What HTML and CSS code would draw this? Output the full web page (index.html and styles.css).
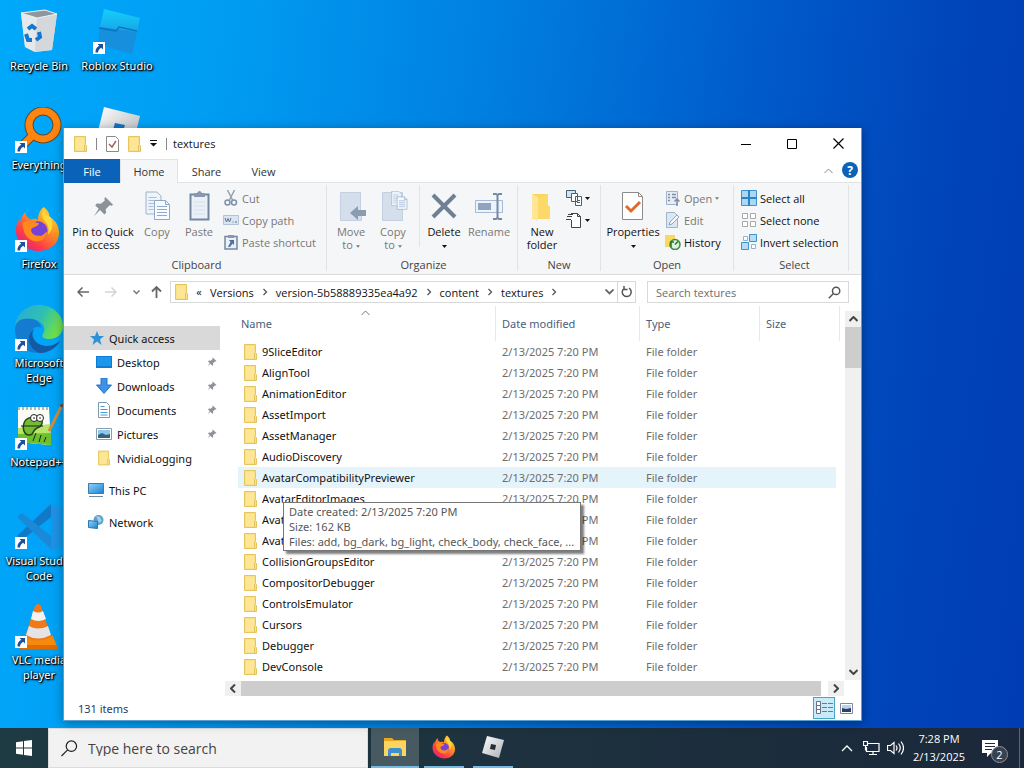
FILE: index.html
```html
<!DOCTYPE html>
<html lang="en">
<head>
    <meta charset="UTF-8">
    <meta name="viewport" content="width=device-width, initial-scale=1.0">
    <title>textures</title>
    <link rel="stylesheet" href="styles.css">
</head>
<body>
    <!-- shared icons -->
    <svg class="defs" aria-hidden="true">
        <defs>
            <linearGradient id="fxBody" x1="1" y1="0" x2="0.2" y2="1">
                <stop offset="0" stop-color="#fff04a"/>
                <stop offset="0.4" stop-color="#ff9a20"/>
                <stop offset="0.75" stop-color="#ff3d45"/>
                <stop offset="1" stop-color="#d8208c"/>
            </linearGradient>
            <linearGradient id="edgeTop" x1="0" y1="0" x2="1" y2="0.4">
                <stop offset="0" stop-color="#28a8e0"/>
                <stop offset="0.6" stop-color="#2fc0b0"/>
                <stop offset="1" stop-color="#6ee04c"/>
            </linearGradient>
            <linearGradient id="screen" x1="0" y1="0" x2="1" y2="1">
                <stop offset="0" stop-color="#8fd4fa"/>
                <stop offset="1" stop-color="#1a7fd0"/>
            </linearGradient>
            <linearGradient id="silver" x1="0" y1="0" x2="1" y2="1">
                <stop offset="0" stop-color="#ffffff"/>
                <stop offset="1" stop-color="#a9b0b6"/>
            </linearGradient>
            <linearGradient id="studio" x1="0" y1="0" x2="0" y2="1">
                <stop offset="0" stop-color="#14d0fa"/>
                <stop offset="1" stop-color="#18a4ea"/>
            </linearGradient>
        </defs>
        <symbol id="folder" viewBox="0 0 13 16">
            <path d="M.5.5h11v8l1 1v6H.5z" fill="#fbe08a" stroke="#e6c55c"/>
            <path d="M2 2h8v12H2z" fill="#fde695"/>
            <path d="M10.500 9v6" stroke="#e3c463"/>
        </symbol>
        <symbol id="pin" viewBox="0 0 24 24">
            <path d="M14 1l9 9-2 1-2-.4-4.500 4.500.5 4-2 2-5-5L1 23l5.500-8.500-4-4 2-2 4.500.4L13.500 5 13 3z" fill="#8c9299"/>
        </symbol>
        <symbol id="shortcut" viewBox="0 0 12 12">
            <path d="M0 0h12v12H0z" fill="#fff"/>
            <path d="M4.500 2H10v5.500L8.200 5.700C6 7 5.300 8 5 10.500H2.500C2.300 7.300 3.600 5.200 6.300 3.800z" fill="#1d4f9c"/>
        </symbol>
        <symbol id="firefox" viewBox="0 0 48 48">
            <path d="M30 1c5 4 6 7 6 10 5 3 10 9 10 17 0 11-9 19-21 19S1 38 1 26c0-6 2-11 4-13v6c1-6 3-10 6-13 0 4 2 7 6 8 4-1 5-1 7 1 0-6 2-11 6-14z" fill="url(#fxBody)"/>
            <circle cx="24" cy="26" r="10" fill="#7542d8"/>
            <path d="M8 18c5-4 12-1 17 0-1 4-5 3-8 6-1 3 2 7 7 7 5 1 7-3 10-5-1 9-9 13-16 10C11 33 8 26 8 18z" fill="#ff8a1c"/>
            <path d="M30 4c-3 6-1 9 2 13 3 3 4 8 2 13 6-5 7-13 2-19-2-2-5-3-6-7z" fill="#ffd93b"/>
        </symbol>
        <symbol id="caret" viewBox="0 0 7 4"><path d="M0 0h7L3.500 4z" fill="currentColor"/></symbol>
        <symbol id="chevron" viewBox="0 0 8 8"><path d="M2.500 1L5.500 4 2.500 7" fill="none" stroke="currentColor" stroke-width="1.300"/></symbol>
        <symbol id="glass" viewBox="0 0 16 16">
            <circle cx="10" cy="6" r="4.500" fill="none" stroke="currentColor" stroke-width="1.800"/>
            <path d="M7 9l-6 6" stroke="currentColor" stroke-width="1.800"/>
        </symbol>
        <symbol id="sheets" viewBox="0 0 26 30">
            <path d="M1 1h11l4 4v18H1z" fill="#eef3fa" stroke="#9db4d0"/>
            <path d="M3.500 6.500h8M3.500 9.500h8M3.500 12.500h8M3.500 15.500h5M3.500 18.500h5" stroke="#a9bedb"/>
            <path d="M9.500 9.500h11l4 4v15h-15z" fill="#f7faff" stroke="#8fa9ca"/>
            <path d="M20.500 9.500v4h4M12 15.500h10M12 18.500h10M12 21.500h10M12 24.500h10" fill="none" stroke="#8fa9ca"/>
        </symbol>
    </svg>

    <main class="desktop">
        <div class="shortcuts">
            <a class="shortcut" href="#">
                <svg class="app-icon" viewBox="0 0 48 48">
                    <path d="M6 5l24-3 12 4-5 36-17 2-10-5z" fill="#d3d7da"/>
                    <path d="M6 5l16 5-2 34-10-5z" fill="#e6e9eb"/>
                    <path d="M22 10l20-4-5 36-17 2z" fill="#d5d8db"/>
                    <path d="M6 5l24-3 12 4-20 4z" fill="#8c979f" stroke="#eef0f1"/>
                    <path d="M13 21l4-3 4 3M24 24l1 5-4 3M17 32h-4l-2-6" fill="none" stroke="#1377cf" stroke-width="4"/>
                </svg>
                <span>Recycle Bin</span>
            </a>
            <a class="shortcut" href="#">
                <svg class="app-icon" viewBox="0 0 48 48">
                    <circle cx="28" cy="18" r="14" fill="none" stroke="#5d4a2c" stroke-width="9"/>
                    <path d="M18 28L7 39" stroke="#5d4a2c" stroke-width="9"/>
                    <circle cx="28" cy="18" r="14" fill="none" stroke="#ff8410" stroke-width="7"/>
                    <path d="M18 28L7 39" stroke="#ff8410" stroke-width="7"/>
                    <use href="#shortcut" x="0" y="34" width="12" height="12"/>
                </svg>
                <span>Everything</span>
            </a>
            <a class="shortcut" href="#">
                <svg class="app-icon" viewBox="0 0 48 48">
                    <use href="#firefox" width="46" height="46"/>
                    <use href="#shortcut" x="0" y="34" width="12" height="12"/>
                </svg>
                <span>Firefox</span>
            </a>
            <a class="shortcut" href="#">
                <svg class="app-icon" viewBox="0 0 48 48">
                    <path d="M0 22C1 8 12 0 24 0c14 0 24 10 24 21 0 9-7 13-14 13-5 0-8-2-6-5 5-8-4-15-13-15C8 14 2 17 0 22z" fill="url(#edgeTop)"/>
                    <path d="M0 24c0-8 8-12 17-10 6 1 9 5 9 9-4-3-10 0-10 7 0 10 8 17 17 17-5 1-8 1-10 1C9 48 0 37 0 24z" fill="#147bd1"/>
                    <path d="M19 24c-5 8 3 17 13 17 6 0 10-3 13-5-4 8-13 12-20 12-10-3-16-16-6-24z" fill="#1459a5"/>
                    <use href="#shortcut" x="0" y="34" width="12" height="12"/>
                </svg>
                <span>Microsoft<br>Edge</span>
            </a>
            <a class="shortcut" href="#">
                <svg class="app-icon" viewBox="0 0 48 48">
                    <path d="M3 3h31l2 38-33-3z" fill="#fbfdf5"/>
                    <path d="M3 24l32-4 1 21-33-3z" fill="#b9e66a"/>
                    <path d="M3 30l33-1v12l-33-3z" fill="#6cc02c"/>
                    <path d="M4 3v3M8 2v4M12 2v4M16 2v4M20 2v4M24 2v4M28 2v4M32 2v4" stroke="#777"/>
                    <path d="M9 19c2-6 9-7 16-4 4 2 2 8-3 9-5 2-3 8-8 7-5 0-7-7-5-12z" fill="#74bd32" stroke="#24451a" stroke-width="1.500"/>
                    <circle cx="19" cy="14" r="3.500" fill="#fff" stroke="#222"/>
                    <circle cx="25" cy="14" r="3.500" fill="#fff" stroke="#222"/>
                    <path d="M19 13v2M25 13v2M6 22h22M18 37l3-8M24 38l2-7M29 38l2-5" stroke="#222" fill="none"/>
                    <path d="M34 27L47 1" stroke="#d28b37" stroke-width="3"/>
                    <path d="M46 3l2-4" stroke="#555" stroke-width="3"/>
                    <use href="#shortcut" x="0" y="34" width="12" height="12"/>
                </svg>
                <span>Notepad++</span>
            </a>
            <a class="shortcut" href="#">
                <svg class="app-icon" viewBox="0 0 48 48">
                    <path d="M36 1v13L7 37l-5-4z" fill="#1278c8"/>
                    <path d="M2 14l5-4 29 23v13z" fill="#1a8ad8"/>
                    <path d="M36 1l11 4v38l-11 5z" fill="#1c93e6"/>
                    <use href="#shortcut" x="0" y="34" width="12" height="12"/>
                </svg>
                <span>Visual Studio<br>Code</span>
            </a>
            <a class="shortcut" href="#">
                <svg class="app-icon" viewBox="0 0 48 48">
                    <path d="M12 34h26l5 13H5z" fill="#f58a0c"/>
                    <path d="M5 43h38v4H5z" fill="#e06c00"/>
                    <path d="M20 4q3-4 6 0l10 31q-13 7-26 0z" fill="#f07818"/>
                    <path d="M18 9q5 3 10 0l3 8q-8 4-15 0z" fill="#f2f2f2"/>
                    <path d="M14 24q9 5 19 0l3 9q-13 7-25 0z" fill="#e4e4e6"/>
                    <use href="#shortcut" x="0" y="34" width="12" height="12"/>
                </svg>
                <span>VLC media<br>player</span>
            </a>
            <a class="shortcut" href="#">
                <svg class="app-icon" viewBox="0 0 48 48">
                    <path d="M11 1l36 9-3 14-37-5z" fill="url(#studio)"/>
                    <path d="M7 19l37 5-5 22-34-10z" fill="#178fdc"/>
                    <path d="M6 20l17 3 3-4 18 4" fill="none" stroke="#0b74be" stroke-width="1.500"/>
                    <use href="#shortcut" x="0" y="34" width="12" height="12"/>
                </svg>
                <span>Roblox Studio</span>
            </a>
            <a class="shortcut" href="#">
                <svg class="app-icon" viewBox="0 0 48 48">
                    <path d="M11 0l36 9-9 36-36-9z" fill="url(#silver)"/>
                    <path d="M22 16l10 2-3 10-10-2z" fill="#1673c4"/>
                </svg>
                <span>Roblox Player</span>
            </a>
        </div>

        <section class="window">
            <header class="titlebar">
                <svg class="folder"><use href="#folder"/></svg>
                <i class="bar"></i>
                <button class="quick" aria-label="Properties">
                    <svg width="13" height="16" viewBox="0 0 13 16"><path d="M.5.500h9l3 3v12H.5z" fill="#fff" stroke="#8a8a8a"/><path d="M3 8l3 3 4-6" fill="none" stroke="#a5655a" stroke-width="1.500"/></svg>
                </button>
                <button class="quick" aria-label="New folder"><svg class="folder"><use href="#folder"/></svg></button>
                <button class="quick" aria-label="Customize">
                    <svg width="7" height="7" viewBox="0 0 7 7"><path d="M0 .5h7" stroke="#111"/><path d="M0 3h7L3.500 6.500z" fill="#111"/></svg>
                </button>
                <div class="caption">
                    <i class="bar"></i>
                    <h1>textures</h1>
                </div>
                <div class="controls">
                    <button aria-label="Minimize"><svg width="10" height="10"><path d="M0 5.500h10" stroke="#000"/></svg></button>
                    <button aria-label="Maximize"><svg width="10" height="10"><path d="M.5.500h9v9h-9z" fill="none" stroke="#000"/></svg></button>
                    <button aria-label="Close"><svg width="11" height="11"><path d="M.5.500l10 10M10.500.500l-10 10" stroke="#000" stroke-width="1.200"/></svg></button>
                </div>
            </header>

            <nav class="tabs">
                <button class="tab file">File</button>
                <button class="tab active">Home</button>
                <button class="tab">Share</button>
                <button class="tab">View</button>
                <button class="collapse" aria-label="Collapse ribbon"><svg width="9" height="6"><path d="M.5 5l4-4 4 4" fill="none" stroke="#888"/></svg></button>
                <button class="help" aria-label="Help">?</button>
            </nav>

            <div class="ribbon">
                <div class="group clipboard">
                    <div class="tools">
                        <button class="big pin">
                            <svg width="32" height="32" viewBox="0 0 32 32"><use href="#pin" x="6" y="5" width="21" height="21"/></svg>
                            <span>Pin to Quick<br>access</span>
                        </button>
                        <button class="big narrow" disabled>
                            <svg width="32" height="32" viewBox="0 0 32 32"><use href="#sheets" x="4" y="0" width="26" height="30"/></svg>
                            <span>Copy</span>
                        </button>
                        <button class="big" disabled>
                            <svg width="32" height="32" viewBox="0 0 32 32">
                                <path d="M7.500 3.500h18v25h-18z" fill="#eaf0f8" stroke="#7487a0" stroke-width="2"/>
                                <path d="M11 2h3q2.500-4 5 0h3v4H11z" fill="#8898ae"/>
                                <path d="M11 11h11M11 15h11M11 19h11M11 23h11" stroke="#d4dfed"/>
                            </svg>
                            <span>Paste</span>
                        </button>
                        <div class="smalls">
                            <button class="small" disabled>
                                <svg width="16" height="16" viewBox="0 0 16 16"><path d="M4.500 0l5 10M11.500 0l-5 10" stroke="#98a3b0" stroke-width="1.500"/><circle cx="4.500" cy="12.500" r="2.500" fill="none" stroke="#7d90ac" stroke-width="1.500"/><circle cx="11" cy="12.500" r="2.500" fill="none" stroke="#7d90ac" stroke-width="1.500"/></svg>
                                Cut
                            </button>
                            <button class="small" disabled>
                                <svg width="16" height="16" viewBox="0 0 16 16"><path d="M.5 3.500h15v9H.5z" fill="#dbe5f1" stroke="#b4c4d8"/><path d="M2 6l1.500 4L5 6.500 6.500 10 8 6M9.500 10h1M12 10h2" fill="none" stroke="#60718a"/></svg>
                                Copy path
                            </button>
                            <button class="small" disabled>
                                <svg width="16" height="16" viewBox="0 0 16 16"><path d="M2 2.500h12v12.500H2z" fill="#eaf0f8" stroke="#7487a0" stroke-width="1.500"/><path d="M5 1h6v3H5z" fill="#8898ae"/><path d="M6 6h5v5L9.500 9.500 7 13H5l2.500-5z" fill="#526e9c"/></svg>
                                Paste shortcut
                            </button>
                        </div>
                    </div>
                    <div class="group-name">Clipboard</div>
                </div>

                <div class="group organize">
                    <div class="tools">
                        <button class="big medium" disabled>
                            <svg width="32" height="32" viewBox="0 0 32 32"><path d="M5.500 1.500h20v20l1 1v7h-21z" fill="#d5dfec" stroke="#c2d0e2"/><path d="M15 22l8-7v4h8v6h-8v4z" fill="#8b9bb2"/></svg>
                            <span>Move<br>to <svg class="caret tiny"><use href="#caret"/></svg></span>
                        </button>
                        <button class="big medium" disabled>
                            <svg width="32" height="32" viewBox="0 0 32 32"><path d="M5.500 1.500h20v28h-20z" fill="#d5dfec" stroke="#c2d0e2"/><use href="#sheets" x="14" y="-1" width="17" height="21"/></svg>
                            <span>Copy<br>to <svg class="caret tiny"><use href="#caret"/></svg></span>
                        </button>
                        <i class="divider"></i>
                        <button class="big">
                            <svg width="32" height="32" viewBox="0 0 32 32"><path d="M5 4l22 22M27 4L5 26" stroke="#6f8095" stroke-width="4"/></svg>
                            <span>Delete<br><svg class="caret"><use href="#caret"/></svg></span>
                        </button>
                        <button class="big rename" disabled>
                            <svg width="32" height="32" viewBox="0 0 32 32"><path d="M2.500 9.500h27v12h-27z" fill="#edf3fa" stroke="#a5bad4"/><path d="M5 12h13v7H5z" fill="#90a4be"/><path d="M20 3h3l1.500 1L26 3h3M24.500 4v23M20 28h3l1.500-1 1.500 1h3" fill="none" stroke="#7689a3" stroke-width="2"/></svg>
                            <span>Rename</span>
                        </button>
                    </div>
                    <div class="group-name">Organize</div>
                </div>

                <div class="group new">
                    <div class="tools">
                        <button class="big folder-button">
                            <svg width="32" height="32" viewBox="0 0 32 32"><path d="M6 3h16v11l2 2v12H6z" fill="#fbd65f"/><path d="M6 3l6 3v24l-6-3z" fill="#ffe695"/><path d="M22 3v13l2 2v10H12V8" fill="#fcd968"/></svg>
                            <span>New<br>folder</span>
                        </button>
                        <div class="smalls">
                            <button class="small icon-only" aria-label="New item">
                                <svg width="16" height="16" viewBox="0 0 16 16"><path d="M.5.500h9v7h-9z" fill="#cfe5f3" stroke="#4b6170"/><path d="M5.500 3.500h6v8h-6zM9.500 6.500h6v9h-6z" fill="#fff" stroke="#4b6170"/><path d="M11 10.500h3M11 12.500h3" stroke="#4b6170"/></svg>
                                <svg class="caret"><use href="#caret"/></svg>
                            </button>
                            <button class="small icon-only" aria-label="Easy access">
                                <svg width="16" height="16" viewBox="0 0 16 16"><path d="M5 1.500h6.500l3 3v11H5.500V8M11.500 1.500v3h3" fill="#fff" stroke="#444"/><path d="M2 2.500h5M1 4.500h5M0 7.500h5" stroke="#444"/></svg>
                                <svg class="caret"><use href="#caret"/></svg>
                            </button>
                        </div>
                    </div>
                    <div class="group-name">New</div>
                </div>

                <div class="group open">
                    <div class="tools">
                        <button class="big properties">
                            <svg width="32" height="32" viewBox="0 0 32 32"><path d="M5.500 1.500h16l4 4v23h-20z" fill="#fff" stroke="#8b8b8b"/><path d="M21.500 1.500v4h4" fill="none" stroke="#8b8b8b"/><path d="M9 15l5 5 9-9" fill="none" stroke="#e0692c" stroke-width="3"/></svg>
                            <span>Properties<br><svg class="caret"><use href="#caret"/></svg></span>
                        </button>
                        <div class="smalls">
                            <button class="small" disabled>
                                <svg width="16" height="16" viewBox="0 0 16 16"><path d="M1.500 1.500h11v13h-11z" fill="#e5ecf4" stroke="#a1b3c9"/><path d="M3 4.500h2M3 7.500h2M3 10.500h2M7 4.500h4M7 7.500h4" stroke="#7d8fa8" stroke-width="1.500"/><path d="M12 16V9M9.500 11.500L12 9l2.500 2.500" stroke="#7d8fa8" fill="none" stroke-width="1.500"/></svg>
                                Open <svg class="caret tiny"><use href="#caret"/></svg>
                            </button>
                            <button class="small" disabled>
                                <svg width="16" height="16" viewBox="0 0 16 16"><path d="M1.500.500h8l3 3v12h-11z" fill="#dce7f4" stroke="#a1b3c9"/><path d="M4 13l1-3 7-7 2 2-7 7z" fill="#f7faff" stroke="#8da3c0"/></svg>
                                Edit
                            </button>
                            <button class="small">
                                <svg width="16" height="16" viewBox="0 0 16 16"><path d="M0 1h10v12H0z" fill="#f8d960"/><circle cx="10" cy="10.500" r="5" fill="#dff0dc" stroke="#3e8a43" stroke-width="1.500"/><path d="M10 10.500l3-3M6 13V8h3" stroke="#28732f" stroke-width="1.500" fill="none"/></svg>
                                History
                            </button>
                        </div>
                    </div>
                    <div class="group-name">Open</div>
                </div>

                <div class="group select">
                    <div class="tools">
                        <div class="smalls">
                            <button class="small">
                                <svg width="16" height="16" viewBox="0 0 16 16"><path d="M.5.500h15v15H.5z" fill="#a8d8f5" stroke="#3d93cd"/><path d="M8 0v16M0 8h16" stroke="#2d82bf" stroke-width="2"/></svg>
                                Select all
                            </button>
                            <button class="small">
                                <svg width="16" height="16" viewBox="0 0 16 16"><path d="M1.500 1.500h5v5h-5zM9.500 1.500h5v5h-5zM1.500 9.500h5v5h-5zM9.500 9.500h5v5h-5z" fill="#fff" stroke="#a8a8a8"/></svg>
                                Select none
                            </button>
                            <button class="small">
                                <svg width="16" height="16" viewBox="0 0 16 16"><path d="M2.500 2.500h4v4h-4zM10.500 10.500h4v4h-4z" fill="#fff" stroke="#90b4cd"/><path d="M8.500.500h7v7h-7zM.5 8.500h7v7h-7z" fill="#b4ddf6" stroke="#3d93cd"/></svg>
                                Invert selection
                            </button>
                        </div>
                    </div>
                    <div class="group-name">Select</div>
                </div>
            </div>

            <div class="navbar">
                <button aria-label="Back"><svg width="12" height="10"><path d="M12 5H1M5.500.500L1 5l4.500 4.500" fill="none" stroke="#666" stroke-width="1.500"/></svg></button>
                <button aria-label="Forward" disabled><svg width="12" height="10"><path d="M0 5h11M6.500.500L11 5 6.500 9.500" fill="none" stroke="#d5d5d5" stroke-width="1.500"/></svg></button>
                <button class="recent" aria-label="Recent"><svg width="7" height="5"><path d="M.5.500l3 3 3-3" fill="none" stroke="#777" stroke-width="1.500"/></svg></button>
                <button class="up" aria-label="Up"><svg width="11" height="12"><path d="M5.500 12V1M1 5.500L5.500 1 10 5.500" fill="none" stroke="#666" stroke-width="1.800"/></svg></button>
                <div class="address">
                    <svg class="folder"><use href="#folder"/></svg>
                    <span class="more">«</span>
                    <button>Versions</button>
                    <svg class="sep"><use href="#chevron"/></svg>
                    <button>version-5b58889335ea4a92</button>
                    <svg class="sep"><use href="#chevron"/></svg>
                    <button>content</button>
                    <svg class="sep"><use href="#chevron"/></svg>
                    <button>textures</button>
                    <svg class="sep"><use href="#chevron"/></svg>
                    <button class="history" aria-label="Previous locations"><svg width="9" height="6"><path d="M.5.500l4 4 4-4" fill="none" stroke="#666" stroke-width="1.800"/></svg></button>
                    <button class="refresh" aria-label="Refresh"><svg width="12" height="12" viewBox="0 0 12 12"><path d="M3 2.500a4.500 4.500 0 1 0 5-.3M3 0v3.500h3.500" fill="none" stroke="#555" stroke-width="1.500"/></svg></button>
                </div>
                <label class="search">
                    <input type="text" placeholder="Search textures" aria-label="Search textures">
                    <svg width="13" height="13"><use href="#glass"/></svg>
                </label>
            </div>

            <div class="body">
                <nav class="tree">
                    <a class="root current" href="#">
                        <svg width="14" height="14" viewBox="0 0 14 14"><path d="M7 0l2 5h5l-4 3.500L11.500 14 7 10.500 2.500 14 4 8.500 0 5h5z" fill="#2e92da"/></svg>
                        Quick access
                    </a>
                    <a href="#">
                        <svg width="16" height="16" viewBox="0 0 16 16"><path d="M0 2h16v12H0z" fill="#0d7dd3"/><path d="M1 3h14v9H1z" fill="#1b97ee"/></svg>
                        Desktop <svg class="pinned"><use href="#pin"/></svg>
                    </a>
                    <a href="#">
                        <svg width="16" height="16" viewBox="0 0 16 16"><path d="M5 0h6v7h4.500L8 15.500.5 7H5z" fill="#3b92e6" stroke="#2475c8"/></svg>
                        Downloads <svg class="pinned"><use href="#pin"/></svg>
                    </a>
                    <a href="#">
                        <svg width="16" height="16" viewBox="0 0 16 16"><path d="M2.500.500h8l3 3v12h-11z" fill="#fff" stroke="#7b98aa"/><path d="M4.500 4.500h4M4.500 7.500h7M4.500 10.500h7M4.500 13h7" stroke="#4a9ad0"/></svg>
                        Documents <svg class="pinned"><use href="#pin"/></svg>
                    </a>
                    <a href="#">
                        <svg width="16" height="16" viewBox="0 0 16 16"><path d="M.5 2.500h15v11H.5z" fill="#fff" stroke="#8c9ca8"/><path d="M2 4h12v8H2z" fill="#8cc9ee"/><path d="M2 9l4-2 4 2 4-1v4H2z" fill="#35627c"/></svg>
                        Pictures <svg class="pinned"><use href="#pin"/></svg>
                    </a>
                    <a href="#">
                        <svg width="16" height="16" viewBox="0 0 16 16"><use href="#folder" x="2" width="12" height="16"/></svg>
                        NvidiaLogging
                    </a>
                    <a class="root apart" href="#">
                        <svg width="16" height="16" viewBox="0 0 16 16"><path d="M.5 1.500h15v10H.5z" fill="url(#screen)" stroke="#3e7ca8"/><path d="M1 14.500h14" stroke="#6a8ca4"/></svg>
                        This PC
                    </a>
                    <a class="root apart" href="#">
                        <svg width="16" height="16" viewBox="0 0 16 16"><circle cx="10.500" cy="6" r="5" fill="#5b9fcb"/><path d="M8 2l4 1 2 4-3 2z" fill="#9fd0ea"/><path d="M.5 6.500l9 1v7l-9-1z" fill="url(#screen)" stroke="#2b77ae"/></svg>
                        Network
                    </a>
                </nav>

                <div class="pane">
                    <div class="list">
                        <svg class="sort" width="9" height="6"><path d="M.5 5l4-4 4 4" fill="none" stroke="#777"/></svg>
                        <table>
                            <thead>
                                <tr><th class="name">Name</th><th class="date">Date modified</th><th class="type">Type</th><th class="size">Size</th></tr>
                            </thead>
                            <tbody>
                                <tr><td><svg class="folder"><use href="#folder"/></svg>9SliceEditor</td><td>2/13/2025 7:20 PM</td><td>File folder</td><td></td></tr>
                                <tr><td><svg class="folder"><use href="#folder"/></svg>AlignTool</td><td>2/13/2025 7:20 PM</td><td>File folder</td><td></td></tr>
                                <tr><td><svg class="folder"><use href="#folder"/></svg>AnimationEditor</td><td>2/13/2025 7:20 PM</td><td>File folder</td><td></td></tr>
                                <tr><td><svg class="folder"><use href="#folder"/></svg>AssetImport</td><td>2/13/2025 7:20 PM</td><td>File folder</td><td></td></tr>
                                <tr><td><svg class="folder"><use href="#folder"/></svg>AssetManager</td><td>2/13/2025 7:20 PM</td><td>File folder</td><td></td></tr>
                                <tr><td><svg class="folder"><use href="#folder"/></svg>AudioDiscovery</td><td>2/13/2025 7:20 PM</td><td>File folder</td><td></td></tr>
                                <tr class="hovered"><td><svg class="folder"><use href="#folder"/></svg>AvatarCompatibilityPreviewer</td><td>2/13/2025 7:20 PM</td><td>File folder</td><td></td></tr>
                                <tr><td><svg class="folder"><use href="#folder"/></svg>AvatarEditorImages</td><td>2/13/2025 7:20 PM</td><td>File folder</td><td></td></tr>
                                <tr><td><svg class="folder"><use href="#folder"/></svg>AvatarImporter</td><td>2/13/2025 7:20 PM</td><td>File folder</td><td></td></tr>
                                <tr><td><svg class="folder"><use href="#folder"/></svg>AvatarToolsShared</td><td>2/13/2025 7:20 PM</td><td>File folder</td><td></td></tr>
                                <tr><td><svg class="folder"><use href="#folder"/></svg>CollisionGroupsEditor</td><td>2/13/2025 7:20 PM</td><td>File folder</td><td></td></tr>
                                <tr><td><svg class="folder"><use href="#folder"/></svg>CompositorDebugger</td><td>2/13/2025 7:20 PM</td><td>File folder</td><td></td></tr>
                                <tr><td><svg class="folder"><use href="#folder"/></svg>ControlsEmulator</td><td>2/13/2025 7:20 PM</td><td>File folder</td><td></td></tr>
                                <tr><td><svg class="folder"><use href="#folder"/></svg>Cursors</td><td>2/13/2025 7:20 PM</td><td>File folder</td><td></td></tr>
                                <tr><td><svg class="folder"><use href="#folder"/></svg>Debugger</td><td>2/13/2025 7:20 PM</td><td>File folder</td><td></td></tr>
                                <tr><td><svg class="folder"><use href="#folder"/></svg>DevConsole</td><td>2/13/2025 7:20 PM</td><td>File folder</td><td></td></tr>
                                <tr><td><svg class="folder"><use href="#folder"/></svg></td><td></td><td></td><td></td></tr>
                            </tbody>
                        </table>
                        <div class="vscroll">
                            <button aria-label="Scroll up"><svg width="9" height="6"><path d="M.5 5l4-4 4 4" fill="none" stroke="#444" stroke-width="2"/></svg></button>
                            <div class="thumb"></div>
                            <button aria-label="Scroll down"><svg width="9" height="6"><path d="M.5 1l4 4 4-4" fill="none" stroke="#444" stroke-width="2"/></svg></button>
                        </div>
                    </div>
                    <div class="hscroll">
                        <button aria-label="Scroll left"><svg width="6" height="9"><path d="M5 .500l-4 4 4 4" fill="none" stroke="#444" stroke-width="2"/></svg></button>
                        <div class="thumb"></div>
                        <button aria-label="Scroll right"><svg width="6" height="9"><path d="M1 .500l4 4-4 4" fill="none" stroke="#444" stroke-width="2"/></svg></button>
                    </div>
                    <div class="tooltip" role="tooltip">Date created: 2/13/2025 7:20 PM<br>Size: 162 KB<br>Files: add, bg_dark, bg_light, check_body, check_face, ...</div>
                </div>
            </div>

            <footer class="status">
                <span>131 items</span>
                <button class="view details" aria-label="Details"><svg width="17" height="14" viewBox="0 0 17 14"><path d="M.5.500h4v4h-4zM.5 4.500h4v4h-4zM.5 8.500h4v4h-4z" fill="#fff" stroke="#6b6f86"/><path d="M6 2.500h5M12 2.500h5M6 6.500h5M12 6.500h5M6 10.500h5M12 10.500h5" stroke="#777"/></svg></button>
                <button class="view" aria-label="Large icons"><svg width="13" height="11" viewBox="0 0 13 11"><path d="M.5.500h12v10H.5z" fill="#fff" stroke="#8087a0"/><path d="M2 2h9v7H2z" fill="#b8d2f2"/><path d="M2 5l4 1 5-1v4H2z" fill="#2d405f"/></svg></button>
            </footer>
        </section>
    </main>

    <footer class="taskbar">
        <button class="start" aria-label="Start"><svg width="16" height="16" viewBox="0 0 16 16"><path d="M0 2.300L7 1.300v6.200H0zM8 1.100L16 0v7.500H8zM0 8.500h7v6.200l-7-1zM8 8.500h8V16l-8-1.100z" fill="#fff"/></svg></button>
        <label class="task-search">
            <svg width="17" height="17" viewBox="0 0 18 18"><circle cx="11" cy="6.500" r="5.500" fill="none" stroke="#222" stroke-width="1.300"/><path d="M7 10.500l-6.500 6.500" stroke="#222" stroke-width="1.300"/></svg>
            <input type="text" placeholder="Type here to search" aria-label="Type here to search">
        </label>
        <button class="task active" aria-label="File Explorer">
            <svg width="24" height="24" viewBox="0 0 24 24"><path d="M1 3h8l2 2h12v4H1z" fill="#e8a820"/><path d="M1 6h22v15H1z" fill="#fcd462"/><path d="M5 21v-5q0-3 3-3h8q3 0 3 3v5h-3v-3H8v3z" fill="#3f8fcf"/></svg>
        </button>
        <button class="task" aria-label="Firefox"><svg width="24" height="24"><use href="#firefox"/></svg></button>
        <button class="task" aria-label="Roblox"><svg width="24" height="24" viewBox="0 0 24 24"><path d="M6 1l17 4-5 18-17-5z" fill="url(#silver)"/><path d="M10 9l5 1-1 5-5-1z" fill="#222d35"/></svg></button>
        <div class="tray">
            <button aria-label="Show hidden icons"><svg width="12" height="8"><path d="M1 7l5-5 5 5" fill="none" stroke="#fff" stroke-width="1.300"/></svg></button>
            <button aria-label="Network"><svg width="17" height="15" viewBox="0 0 17 15"><path d="M5 2.500h11v8H3.500V6M10 10.500v3M6 13.500h8M.5.500h4v4h-4zM2.500 4.500v5" fill="none" stroke="#fff" stroke-width="1.200"/></svg></button>
            <button aria-label="Volume"><svg width="17" height="14" viewBox="0 0 17 14"><path d="M.5 4.500h3L7 1.500v11L3.500 9.500h-3zM9 4.500q2 2.500 0 5M11.500 2.500q3.500 4.500 0 9M14 .5q5 6.500 0 13" fill="none" stroke="#fff" stroke-width="1.200"/></svg></button>
            <time>7:28 PM<br>2/13/2025</time>
            <button class="notify" aria-label="Notifications">
                <svg width="17" height="17" viewBox="0 0 17 17"><path d="M0 0h16v13H9l-4 4v-4H0z" fill="#fff"/><path d="M3 3.500h10M3 6.500h10M3 9.500h7" stroke="#1c2b3d"/></svg>
                <span class="badge">2</span>
            </button>
        </div>
    </footer>
</body>
</html>
```
FILE: styles.css
```css
* {
    box-sizing: border-box;
}

body {
    margin: 0;
    height: 100vh;
    display: flex;
    flex-direction: column;
    overflow: hidden;
    font-family: "Open Sans", "Noto Sans", sans-serif;
    font-size: 11px;
    line-height: 15px;
    color: #111;
}

button {
    display: flex;
    align-items: center;
    justify-content: center;
    padding: 0;
    border: none;
    background: none;
    font: inherit;
    color: inherit;
}

a {
    color: inherit;
    text-decoration: none;
}

svg {
    flex: none;
}

.defs {
    position: absolute;
    width: 0;
    height: 0;
}

.folder {
    width: 13px;
    height: 16px;
}

.caret {
    width: 5px;
    height: 3px;
    vertical-align: middle;
}

.tiny {
    width: 4px;
}

/* desktop */
.desktop {
    flex: 1;
    min-height: 0;
    position: relative;
    background: linear-gradient(97deg, #00a9fb 0%, #009df3 20%, #007fe0 45%, #005ccb 68%, #0043b9 88%, #003db4 100%);
}

.shortcuts {
    height: 100%;
    display: grid;
    grid-auto-flow: column;
    grid-template-rows: repeat(7, 99px);
    grid-auto-columns: 78px;
}

.shortcut {
    display: flex;
    flex-direction: column;
    align-items: center;
    gap: 2px;
    padding-top: 8px;
    font-family: "Noto Sans", "Open Sans", sans-serif;
    color: #fff;
    text-align: center;
    white-space: nowrap;
    text-shadow: 1px 1px 1px #000, 1px 1px 2px #000, 0 0 3px #000;
}

.app-icon {
    width: 48px;
    height: 48px;
}

/* window */
.window {
    position: absolute;
    inset: 128px 162px 7px 63px;
    display: flex;
    flex-direction: column;
    background: #fff;
    border: 1px solid #5a9fd2;
    border-top: none;
    box-shadow: 0 2px 10px rgba(0, 0, 0, 0.35);
}

.titlebar {
    height: 31px;
    flex: none;
    display: flex;
    align-items: center;
    gap: 9px;
    padding-left: 10px;
}

.bar {
    width: 1px;
    height: 12px;
    background: #888;
}

.caption {
    display: flex;
    align-items: center;
    gap: 6px;
}

h1 {
    margin: 0;
    font-size: 11px;
    font-weight: normal;
}

.controls {
    margin-left: auto;
    height: 100%;
    display: flex;
}

.controls button {
    width: 46px;
}

.tabs {
    height: 24px;
    flex: none;
    display: flex;
    border-bottom: 1px solid #e2e3e4;
}

.tab {
    width: 57px;
    height: 24px;
    color: #333;
}

.tab.file {
    width: 56px;
    background: #0a63b8;
    color: #fff;
}

.tab.active {
    width: 58px;
    background: #f5f6f7;
    border: 1px solid #e2e3e4;
    border-bottom: none;
}

.collapse {
    margin-left: auto;
    width: 20px;
}

.help {
    width: 16px;
    height: 16px;
    margin: 3px 3px 0 4px;
    border-radius: 50%;
    background: #0a63b8;
    color: #fff;
    font-size: 12px;
    font-weight: bold;
}

/* ribbon */
.ribbon {
    height: 92px;
    flex: none;
    display: flex;
    background: #f5f6f7;
    border-bottom: 1px solid #dadbdc;
}

.group {
    display: flex;
    flex-direction: column;
    margin: 2px 0 3px;
    border-right: 1px solid #e2e3e4;
}

.tools {
    flex: 1;
    display: flex;
    align-items: flex-start;
}

.group-name {
    height: 14px;
    text-align: center;
    color: #444;
}

.clipboard {
    width: 263px;
    padding-left: 3px;
}

.organize {
    width: 191px;
    padding-left: 3px;
}

.new {
    width: 83px;
}

.open {
    width: 133px;
}

.select {
    width: 115px;
    padding-left: 7px;
}

.big {
    width: 48px;
    flex-direction: column;
    gap: 2px;
    padding-top: 6px;
    line-height: 13px;
    white-space: nowrap;
}

.pin {
    width: 72px;
}

.narrow {
    width: 36px;
}

.medium {
    width: 42px;
}

.rename {
    width: 42px;
}

.properties {
    width: 64px;
}

button:disabled {
    color: #777;
}

.smalls {
    display: flex;
    flex-direction: column;
    padding-top: 2px;
}

.small {
    height: 22px;
    justify-content: flex-start;
    gap: 3px;
    white-space: nowrap;
}

.divider {
    width: 1px;
    height: 62px;
    margin-left: 5px;
    background: #e2e3e4;
}

/* address row */
.navbar {
    height: 31px;
    flex: none;
    display: flex;
    align-items: center;
    padding: 3px 12px 0 13px;
}

.navbar > button {
    width: 12px;
    margin-right: 16px;
}

.navbar > .recent {
    width: 7px;
    margin-right: 11px;
}

.navbar > .up {
    width: 11px;
    margin-right: 8px;
}

.address {
    flex: 1;
    height: 22px;
    display: flex;
    align-items: center;
    padding-left: 4px;
    border: 1px solid #d9d9d9;
}

.more {
    width: 22px;
    text-align: center;
    line-height: 14px;
}

.sep {
    width: 8px;
    height: 8px;
    margin: 0 7px;
    color: #555;
}

.history {
    margin-left: auto;
    width: 16px;
}

.refresh {
    width: 18px;
    height: 20px;
    border-left: 1px solid #d9d9d9;
}

.search {
    width: 202px;
    height: 22px;
    margin-left: 11px;
    display: flex;
    align-items: center;
    padding: 0 7px 0 8px;
    border: 1px solid #d9d9d9;
    color: #555;
}

input {
    flex: 1;
    min-width: 0;
    padding: 0;
    border: none;
    outline: none;
    background: none;
    font: inherit;
}

input::placeholder {
    color: #6d6d6d;
}

/* window body */
.body {
    flex: 1;
    min-height: 0;
    display: flex;
    font-family: "Noto Sans", "Open Sans", sans-serif;
}

.tree {
    width: 161px;
    padding: 20px 5px 0 0;
}

.tree a {
    height: 24px;
    display: flex;
    align-items: center;
    gap: 5px;
    padding: 0 3px 0 32px;
}

.tree .root {
    padding-left: 24px;
}

.tree .current {
    padding-left: 26px;
    background: #d9d9d9;
}

.tree .apart {
    margin-top: 8px;
}

.tree .pinned {
    width: 10px;
    height: 10px;
    margin-left: auto;
}

.pane {
    flex: 1;
    min-width: 0;
    position: relative;
    display: flex;
    flex-direction: column;
}

.list {
    flex: 1;
    min-height: 0;
    display: flex;
    justify-content: space-between;
    overflow: hidden;
    padding-left: 13px;
}

.sort {
    position: absolute;
    top: 4px;
    left: 136px;
}

table {
    align-self: flex-start;
    width: 602px;
    table-layout: fixed;
    border-collapse: separate;
    border-spacing: 0;
}

th {
    height: 35px;
    padding: 0 6px;
    border-right: 1px solid #e8e8e8;
    color: #4c607a;
    font-weight: normal;
    text-align: left;
}

th.name {
    width: 258px;
    padding-left: 3px;
}

th.date {
    width: 144px;
}

th.type {
    width: 120px;
}

td {
    height: 21px;
    padding: 0 6px;
    color: #6d6d6d;
    white-space: nowrap;
}

td:first-child {
    color: #111;
}

td:last-child {
    border-right: 4px solid transparent;
    background-clip: padding-box;
}

td .folder {
    margin-right: 5px;
    vertical-align: -4px;
}

.hovered td {
    background-color: #e5f3fb;
}

.vscroll {
    width: 16px;
    margin-top: 5px;
    display: flex;
    flex-direction: column;
    background: #f0f0f0;
}

.vscroll button {
    height: 16px;
}

.vscroll .thumb {
    height: 41px;
    margin-bottom: auto;
}

.thumb {
    background: #cdcdcd;
}

.hscroll {
    height: 17px;
    display: flex;
    padding: 1px 17px 1px 0;
}

.hscroll button {
    width: 16px;
    background: #f0f0f0;
}

.hscroll .thumb {
    flex: 1;
    margin-right: 7px;
}

.tooltip {
    position: absolute;
    top: 196px;
    left: 58px;
    padding: 1px 6px 1px 5px;
    border: 1px solid #767676;
    background: #fff;
    color: #575757;
    white-space: nowrap;
    box-shadow: 3px 3px 2px rgba(0, 0, 0, 0.5);
}

.status {
    height: 23px;
    flex: none;
    display: flex;
    align-items: center;
    padding: 0 4px 1px 14px;
    font-family: "Noto Sans", "Open Sans", sans-serif;
    color: #2a3a5a;
}

.status span {
    margin-right: auto;
}

.view {
    width: 22px;
    height: 22px;
}

.details {
    border: 1px solid #4aa3c9;
    background: #c9ebf7;
}

/* taskbar */
.taskbar {
    height: 40px;
    flex: none;
    display: flex;
    background: linear-gradient(90deg, #1e3a42, #1d323e 50%, #1b283b);
    color: #fff;
}

.start {
    width: 48px;
}

.task-search {
    width: 320px;
    margin-right: 3px;
    display: flex;
    align-items: center;
    gap: 10px;
    padding-left: 12px;
    background: #f2f2f2;
    border: 1px solid #dcdcdc;
    font-size: 14px;
}

.task-search input::placeholder {
    color: #444;
}

.task {
    width: 40px;
    margin-left: 9px;
    border-bottom: 2px solid #76b9e4;
}

.task.active {
    width: 48px;
    margin: 0 -4px 0 0;
    background: #475a62;
}

.tray {
    margin-left: auto;
    display: flex;
    align-items: center;
    margin-right: 4px;
    border-right: 1px solid #5d6875;
}

.tray button {
    width: 24px;
    height: 40px;
}

time {
    width: 64px;
    line-height: 18px;
    text-align: center;
}

.tray .notify {
    width: 48px;
    position: relative;
    padding-right: 9px;
}

.badge {
    position: absolute;
    left: 20px;
    top: 18px;
    width: 17px;
    height: 17px;
    border: 1px solid #8b949c;
    border-radius: 50%;
    background: #37424e;
    font-size: 11px;
    line-height: 15px;
}
```
